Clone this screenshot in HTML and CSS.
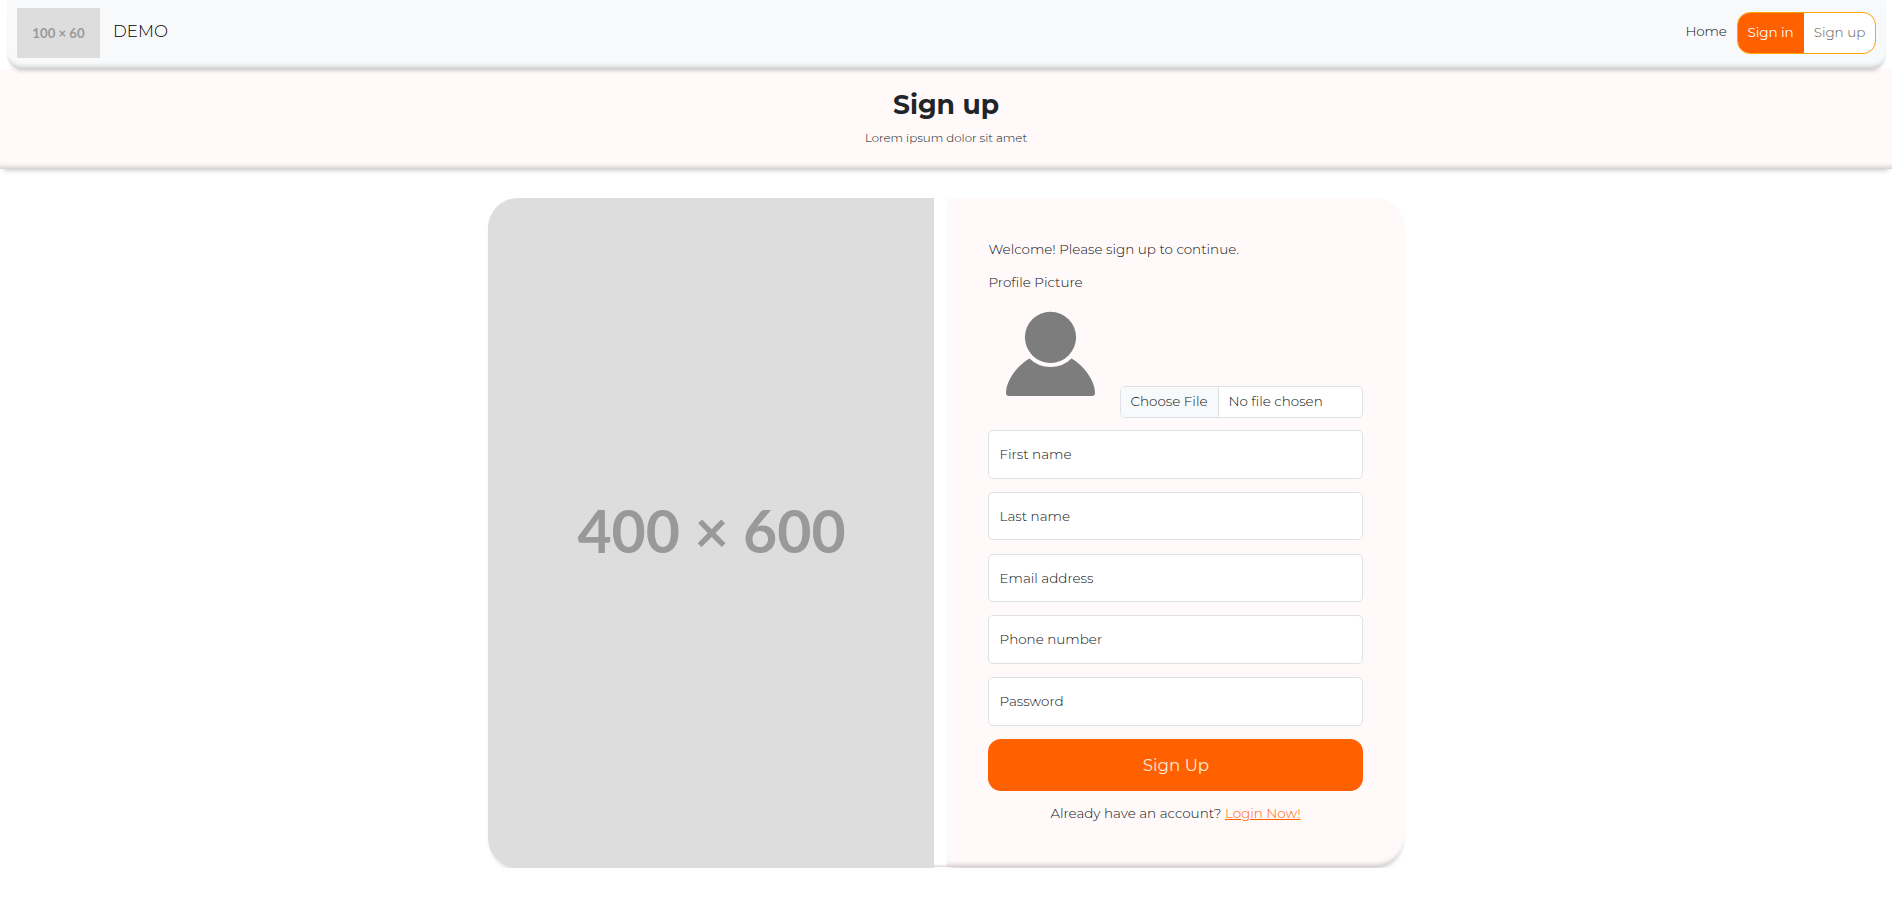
FILE: index.html
```
<!DOCTYPE html>
<html lang="en">
<head>
<meta charset="utf-8">
<title>Sign up</title>
<link rel="stylesheet" href="styles.css">
</head>
<body>
<nav class="navbar">
  <a class="brand"><span class="logo">100 × 60</span><span class="brand-name">DEMO</span></a>
  <div class="nav-links">
    <a class="home">Home</a>
    <div class="auth"><a class="auth-in"><span>Sign in</span></a><a class="auth-up"><span>Sign up</span></a></div>
  </div>
</nav>
<header class="page-header">
  <h1 class="title">Sign up</h1>
  <p class="subtitle">Lorem ipsum dolor sit amet</p>
</header>
<main class="card">
  <div class="cover"><span>400 × 600</span></div>
  <div class="gap"></div>
  <form class="panel">
    <p class="welcome">Welcome! Please sign up to continue.</p>
    <p class="picture-label">Profile Picture</p>
    <div class="picture-row">
      <svg class="avatar" viewBox="0 0 124 106" width="124" height="106">
        <circle cx="62.5" cy="45.300" r="25.6" fill="#7d7d7d"/>
        <path d="M41.5 66.500C30 73 18 88 18 101Q18 104 21 104H104Q107 104 107 101C107 88 95 73 83.500 66.500Q75 75 62.500 75Q50 75 41.500 66.500Z" fill="#7d7d7d"/>
      </svg>
      <div class="file"><div class="file-button">Choose File</div><div class="file-name">No file chosen</div></div>
    </div>
    <div class="fields">
      <label class="field">First name</label>
      <label class="field">Last name</label>
      <label class="field">Email address</label>
      <label class="field">Phone number</label>
      <label class="field">Password</label>
    </div>
    <button class="submit" type="button">Sign Up</button>
    <p class="login">Already have an account? <a class="login-link">Login Now!</a></p>
  </form>
</main>
</body>
</html>
```
FILE: styles.css
```
* { box-sizing: border-box; }
body {
  margin: 0;
  background: #fff;
  color: #0c0f12;
  font: 300 13.5px/20px Montserrat, Inter, "Open Sans", sans-serif;
  overflow: hidden;
}
p, h1 { margin: 0; }
.navbar {
  position: relative;
  display: flex;
  justify-content: space-between;
  height: 69px;
  margin: 0 6px 0 7px;
  padding: 8px 10px 0;
  background: #f8f9fb;
  border-radius: 0 0 15px 15px;
  box-shadow: inset 0 -6px 5px -4px rgba(0,0,0,.2), 0 5px 5px -4px rgba(0,0,0,.25);
}
.brand { display: flex; gap: 13px; }
.logo {
  width: 83px;
  height: 50px;
  background: #ddd;
  color: #999;
  font: 700 13.2px/50px Lato, sans-serif;
  text-align: center;
}
.brand-name { font-size: 16.7px; line-height: 46px; color: #000; }
.nav-links { display: flex; gap: 10.5px; }
.home { line-height: 47px; letter-spacing: -.2px; }
.auth {
  display: flex;
  width: 139px;
  height: 42px;
  margin-top: 4px;
  border: 1px solid orange;
  border-radius: 13px;
  overflow: hidden;
  background: #fff;
  line-height: 39px;
  text-align: center;
}
.auth-in { width: 66px; padding-right: 1px; background: #ff6000; color: #fff; font-weight: 400; letter-spacing: -.1px; }
.auth-up { flex: 1; color: #5c5c5c; }
.page-header {
  height: 100px;
  padding-top: 19px;
  background: #fffaf9;
  text-align: center;
  box-shadow: inset 0 -6px 5px -4px rgba(0,0,0,.2), 0 5px 5px -4px rgba(0,0,0,.25);
}
.title { color: #212529; font-size: 26.6px; line-height: 34px; font-weight: 700; }
.subtitle { margin-top: 6px; font-size: 11.8px; line-height: 20px; }
.card {
  display: flex;
  width: 917px;
  height: 670px;
  margin: 29px auto 0;
}
.cover {
  width: 446px;
  background: #ddd;
  color: #999;
  border-radius: 30px 0 0 30px;
  font: 700 59px/666px Lato, sans-serif;
  text-align: center;
  padding-left: 2px;
  box-shadow: 0 4px 5px -3px rgba(0,0,0,.2);
}
.gap {
  width: 13px;
  height: 669px;
  background: #fff;
  box-shadow: inset 0 -5px 3px -4px rgba(0,0,0,.2);
}
.panel {
  width: 458px;
  height: 669px;
  padding: 41px 42px 0 41px;
  background: #fffaf9;
  border-radius: 0 30px 30px 0;
  box-shadow: inset 0 -6px 5px -4px rgba(0,0,0,.2), 0 5px 5px -4px rgba(0,0,0,.25);
}
.welcome, .picture-label { padding-left: 1px; }
.picture-label { margin-top: 13px; }
.picture-row {
  display: flex;
  justify-content: space-between;
  align-items: flex-end;
  height: 126px;
}
.avatar { align-self: flex-start; }
.file {
  display: flex;
  width: 243px;
  height: 32px;
  border: 1px solid #dee2e6;
  border-radius: 5px;
  background: #fff;
  line-height: 28px;
  overflow: hidden;
}
.file-button { width: 98px; padding-left: 10px; background: #f8f9fb; border-right: 1px solid #dee2e6; }
.file-name { padding-left: 10px; }
.fields { display: flex; flex-direction: column; gap: 13.2px; margin-top: 12.3px; }
.field {
  height: 48.5px;
  padding-left: 11px;
  border: 1px solid #dee2e6;
  border-radius: 5px;
  background: #fff;
  line-height: 46px;
}
.submit {
  display: block;
  width: 100%;
  height: 52px;
  margin-top: 13.4px;
  padding-left: 8px;
  border: 0;
  border-radius: 13px;
  background: #ff6000;
  color: #ffe9dc;
  font: 400 16.7px/50px Montserrat, Inter, sans-serif;
}
.login { margin-top: 12px; padding-left: 1px; text-align: center; }
.login-link { color: #ff6000; text-decoration: underline; }
```
